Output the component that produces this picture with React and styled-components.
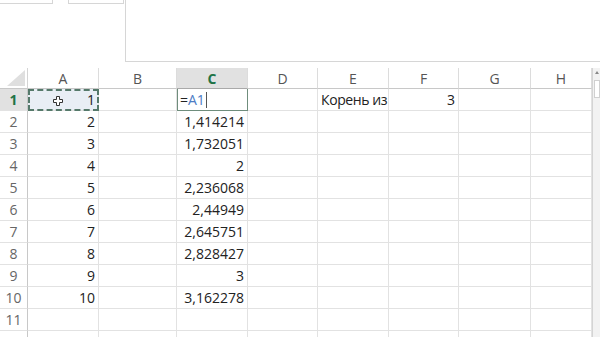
import styled, { createGlobalStyle } from "styled-components";

const GlobalStyle = createGlobalStyle`
  body {
    margin: 0;
    background: #fff;
    font-family: "Open Sans", "Liberation Sans", sans-serif;
  }
`;

const Page = styled.div`
  width: 600px;
  height: 337px;
  overflow: hidden;
  background: #fff;
`;

const Toolbar = styled.div`
  height: 68px;
  display: grid;
  grid-template-columns: 125px 1fr;
`;

const Controls = styled.div`
  display: flex;
  gap: 15px;
  align-items: flex-start;
`;

const StubBox = styled.div`
  width: ${(p) => p.$w}px;
  height: 3px;
  border: 1px solid #d6d6d6;
  border-top: none;
  border-left: ${(p) => (p.$open ? "none" : "1px solid #d6d6d6")};
`;

const FormulaBox = styled.div`
  height: 62px;
  border-left: 1px solid #d6d6d6;
  border-bottom: 1px solid #d6d6d6;
  box-sizing: border-box;
`;

const Sheet = styled.div`
  display: grid;
  grid-template-columns: 28px 71px 78px 71px 70px 71px 70px 72px 61px 8px;
  grid-template-rows: 21px repeat(12, 22px);
  font-size: 14px;
`;

const Corner = styled.div`
  border-right: 1px solid #d4d4d4;
  border-bottom: 1px solid #c8c8c8;
  display: flex;
  align-items: flex-end;
  justify-content: flex-end;
  padding: 0 2px 2px 0;
`;

const ColHead = styled.div`
  display: flex;
  align-items: center;
  justify-content: center;
  color: ${(p) => (p.$active ? "#217346" : "#555")};
  font-weight: ${(p) => (p.$active ? 700 : 400)};
  background: ${(p) => (p.$active ? "#e1e1e1" : "#fff")};
  border-right: 1px solid #dcdcdc;
  border-bottom: 1px solid ${(p) => (p.$active ? "#a9a9a9" : "#c8c8c8")};
  box-sizing: border-box;
`;

const RowHead = styled.div`
  display: flex;
  align-items: center;
  justify-content: center;
  color: ${(p) => (p.$active ? "#217346" : "#666")};
  font-weight: ${(p) => (p.$active ? 700 : 400)};
  background: ${(p) => (p.$active ? "#e1e1e1" : "#fff")};
  border-right: 1px solid #c8c8c8;
  border-bottom: 1px solid #e2e2e2;
  box-sizing: border-box;
`;

const Cell = styled.div`
  position: relative;
  display: flex;
  align-items: center;
  justify-content: ${(p) => (p.$left ? "flex-start" : "flex-end")};
  padding: 0 3px;
  color: #222;
  background: ${(p) => (p.$copied ? "#e8eef5" : "transparent")};
  border-right: 1px solid #e2e2e2;
  border-bottom: 1px solid #e2e2e2;
  box-sizing: border-box;
  white-space: nowrap;
  overflow: visible;
  letter-spacing: ${(p) => (p.$tight ? "-0.4px" : "normal")};
  outline: ${(p) => (p.$copied ? "2px dashed #55796a" : "none")};
  outline-offset: -2px;
`;

const EditCell = styled(Cell)`
  border: 1px solid #6f8d7c;
  border-top: none;
  padding-left: 2px;
`;

const RefText = styled.span`
  color: #4d7cc4;
`;

const Caret = styled.span`
  display: inline-block;
  width: 1px;
  height: 16px;
  margin-left: 1px;
  background: #555;
`;

const CursorMark = styled.svg`
  position: absolute;
  left: 25px;
  top: 7px;
`;

const Scroll = styled.div`
  grid-column: 10;
  grid-row: 1 / -1;
  background: #f2f2f2;
  border-left: 1px solid #d4d4d4;
  display: flex;
  flex-direction: column;
  align-items: center;
  padding-top: 3px;
  box-sizing: border-box;
`;

const Arrow = styled.div`
  width: 0;
  height: 0;
  border-left: 2px solid transparent;
  border-right: 2px solid transparent;
  border-bottom: 3px solid #888;
`;

const Thumb = styled.div`
  margin-top: 6px;
  width: 6px;
  height: 18px;
  background: #fff;
  border: 1px solid #d0d0d0;
  box-sizing: border-box;
`;

const cols = ["A", "B", "C", "D", "E", "F", "G", "H"];
const cValues = [
  null,
  "1,414214",
  "1,732051",
  "2",
  "2,236068",
  "2,44949",
  "2,645751",
  "2,828427",
  "3",
  "3,162278",
];

const PlusCursor = () => (
  <CursorMark width="10" height="10" viewBox="0 0 10 10">
    <path
      d="M3.5 0.5h3v3h3v3h-3v3h-3v-3h-3v-3h3z"
      fill="#fff"
      stroke="#333"
      strokeWidth="1"
    />
  </CursorMark>
);

const renderCell = (row, col) => {
  const key = `${col}${row}`;
  if (row === 1 && col === "A")
    return (
      <Cell key={key} $copied>
        <PlusCursor />1
      </Cell>
    );
  if (row === 1 && col === "C")
    return (
      <EditCell key={key} $left>
        =<RefText>A1</RefText>
        <Caret />
      </EditCell>
    );
  if (row === 1 && col === "E")
    return (
      <Cell key={key} $left $tight>
        Корень из
      </Cell>
    );
  if (row === 1 && col === "F") return <Cell key={key}>3</Cell>;
  if (row <= 10 && col === "A") return <Cell key={key}>{row}</Cell>;
  if (row <= 10 && col === "C") return <Cell key={key}>{cValues[row - 1]}</Cell>;
  return <Cell key={key} />;
};

const App = () => {
  const rows = Array.from({ length: 12 }, (_, i) => i + 1);
  return (
    <Page>
      <GlobalStyle />
      <Toolbar>
        <Controls>
          <StubBox $w={52} $open />
          <StubBox $w={54} />
        </Controls>
        <FormulaBox />
      </Toolbar>
      <Sheet>
        <Corner>
          <svg width="18" height="16" viewBox="0 0 18 16">
            <path d="M18 0V16H0Z" fill="#dfdfdf" />
          </svg>
        </Corner>
        {cols.map((c) => (
          <ColHead key={c} $active={c === "C"}>
            {c}
          </ColHead>
        ))}
        <Scroll>
          <Arrow />
          <Thumb />
        </Scroll>
        {rows.map((r) => [
          <RowHead key={`r${r}`} $active={r === 1}>
            {r <= 11 ? r : ""}
          </RowHead>,
          ...cols.map((c) => renderCell(r, c)),
        ])}
      </Sheet>
    </Page>
  );
};

export default App;
